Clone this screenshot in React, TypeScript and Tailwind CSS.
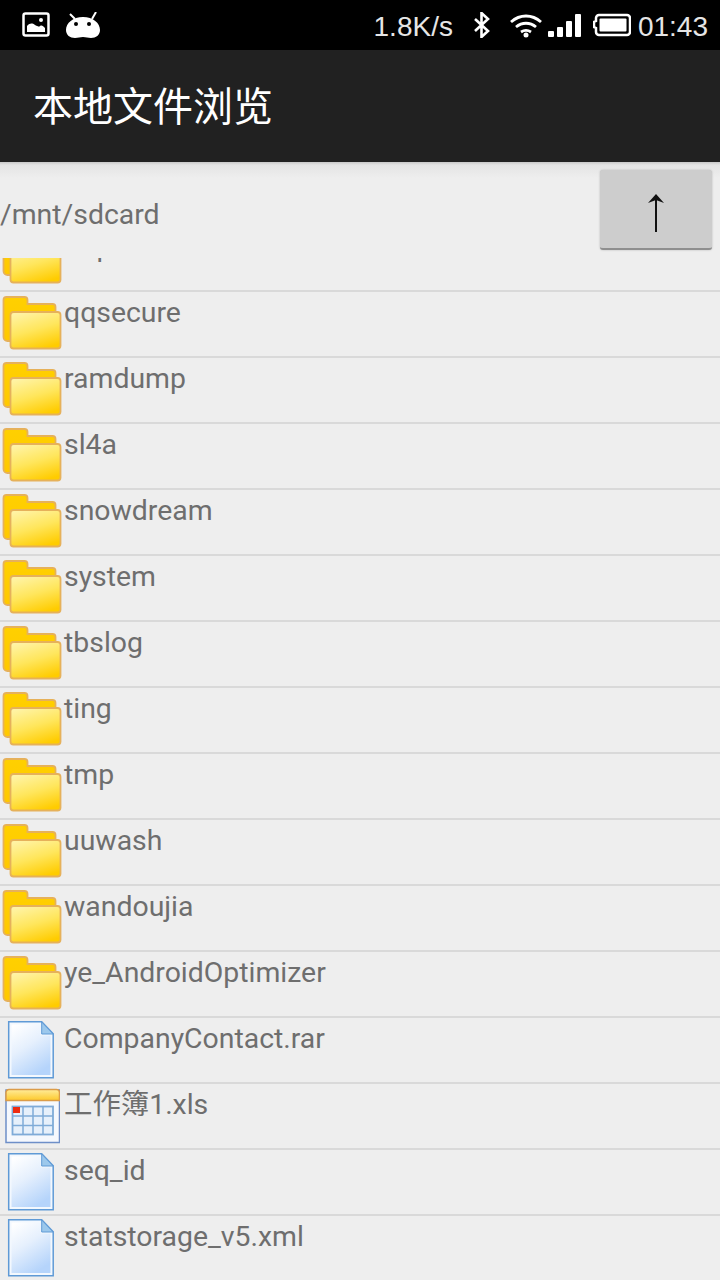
import React from "react";

function Folder() {
  return (
    <svg width="62" height="58" viewBox="0 0 62 58" className="block">
      <defs>
        <linearGradient id="fb" x1="0" y1="0" x2="0" y2="1">
          <stop offset="0" stopColor="#ffd000" />
          <stop offset="1" stopColor="#ffc800" />
        </linearGradient>
        <linearGradient id="ff" x1="0.25" y1="0" x2="0.65" y2="1">
          <stop offset="0" stopColor="#fff3a4" />
          <stop offset="0.5" stopColor="#ffe65c" />
          <stop offset="1" stopColor="#ffcc00" />
        </linearGradient>
      </defs>
      <path d="M3.500 5a3 3 0 0 1 3-3h18a3 3 0 0 1 3 3v4h25a3 3 0 0 1 3 3v10h-44v24h-4a4 4 0 0 1-4-4z" fill="url(#fb)" stroke="#e6b15a" strokeWidth="1.800" />
      <rect x="10.500" y="17" width="50" height="36.500" rx="3" fill="url(#ff)" stroke="#e6b15a" strokeWidth="1.800" />
    </svg>
  );
}

function FileIcon() {
  return (
    <svg width="60" height="58" viewBox="0 0 60 58" className="block">
      <defs>
        <linearGradient id="fg" x1="0.1" y1="0" x2="0.6" y2="1">
          <stop offset="0" stopColor="#ffffff" />
          <stop offset="0.45" stopColor="#e6f0fd" />
          <stop offset="1" stopColor="#b5d4fb" />
        </linearGradient>
      </defs>
      <path d="M8.700 0.800h33l11.500 12v44h-44.500z" fill="#f3f8fe" stroke="#5f9ad6" strokeWidth="1.500" />
      <path d="M11.500 3.500h29v11h10v39.500h-39z" fill="url(#fg)" />
      <path d="M41.700 1v12h11.500z" fill="#9cc8ec" stroke="#5f9ad6" strokeWidth="1" />
    </svg>
  );
}

function XlsIcon() {
  return (
    <svg width="60" height="58" viewBox="0 0 60 58" className="block">
      <defs>
        <linearGradient id="xh" x1="0" y1="0" x2="0" y2="1">
          <stop offset="0" stopColor="#ffec9a" />
          <stop offset="1" stopColor="#fdc92a" />
        </linearGradient>
      </defs>
      <rect x="6" y="3" width="53.500" height="52.500" fill="#f5f8fd" stroke="#6e8fc8" strokeWidth="1.500" />
      <path d="M6 5.500a3 3 0 0 1 3-3h47.500a3 3 0 0 1 3 3v8h-53.500z" fill="url(#xh)" stroke="#dc9c48" strokeWidth="1.500" />
      <rect x="12.500" y="19.500" width="40.500" height="28" fill="#e6f0fb" stroke="#7fabd8" strokeWidth="1.800" />
      <path d="M23 19.500v28M33 19.500v28M43 19.500v28M12.500 29h40.500M12.500 38.500h40.500" stroke="#7fabd8" strokeWidth="1.500" fill="none" />
      <rect x="13" y="20" width="7" height="6" fill="#ee2b10" />
    </svg>
  );
}

type Kind = "folder" | "file" | "xls";
const rows: [string, Kind][] = [
  ["qqsecure", "folder"],
  ["ramdump", "folder"],
  ["sl4a", "folder"],
  ["snowdream", "folder"],
  ["system", "folder"],
  ["tbslog", "folder"],
  ["ting", "folder"],
  ["tmp", "folder"],
  ["uuwash", "folder"],
  ["wandoujia", "folder"],
  ["ye_AndroidOptimizer", "folder"],
  ["CompanyContact.rar", "file"],
  ["工作簿1.xls", "xls"],
  ["seq_id", "file"],
  ["statstorage_v5.xml", "file"],
];

function Row({ name, kind }: { name: string; kind: Kind }) {
  return (
    <div className="flex h-[66px] shrink-0 border-b-2 border-[#d9d9d9]">
      <div className="w-[64px] shrink-0 pt-[3px]">
        {kind === "folder" ? <Folder /> : kind === "file" ? <FileIcon /> : <XlsIcon />}
      </div>
      <span className="text-[28.400px] leading-[42px] text-[#6e6e6e] whitespace-nowrap [font-family:Roboto,'Noto_Sans_CJK_SC',sans-serif]">
        {name}
      </span>
    </div>
  );
}

export default function App() {
  return (
    <div className="flex h-[1280px] w-[720px] flex-col overflow-hidden bg-[#eeeeee] [font-family:Roboto,'Noto_Sans_CJK_SC',sans-serif]">
      <div className="flex h-[50px] shrink-0 items-center justify-between bg-black pl-[22px] pr-[12px]">
        <div className="flex items-center gap-[15px]">
          <svg width="28" height="26" viewBox="0 0 28 26">
            <rect x="1.500" y="1.500" width="25" height="22" rx="2" fill="none" stroke="#fff" strokeWidth="2.500" />
            <path d="M5 20v-6c3-3 5-3 8-1 3 1.500 4 2 5 1 2-1 3 0 5 2v4z" fill="#fff" />
            <circle cx="19" cy="8" r="2" fill="#fff" />
          </svg>
          <svg width="36" height="26" viewBox="0 0 36 26">
            <path d="M5 2l5 5M31 0l-4 7" stroke="#fff" strokeWidth="2" />
            <path d="M18 5c10 0 17 6 17 13 0 5-4 8-9 8-3 0-5-1-8-1s-5 1-8 1c-5 0-9-3-9-8C1 11 8 5 18 5z" fill="#fff" />
            <circle cx="11" cy="12" r="2" fill="#000" />
            <circle cx="24" cy="12" r="2" fill="#000" />
          </svg>
        </div>
        <div className="flex items-center text-[#e6e6e6]">
          <span className="mt-[3px] text-[28px] leading-none [font-family:'Liberation_Sans',sans-serif] font-light">1.8K/s</span>
          <svg width="20" height="26" viewBox="0 0 20 26" className="ml-[19px]">
            <path d="M3 7l13 12-6.500 6V1L16 7 3 19" fill="none" stroke="#fff" strokeWidth="2.600" />
          </svg>
          <svg width="34" height="26" viewBox="0 0 34 26" className="ml-[17px]">
            <path d="M2 10c9-8 21-8 30 0M7 15c6-5 14-5 20 0M12 20c3-2 7-2 10 0" fill="none" stroke="#fff" strokeWidth="2.800" />
            <circle cx="17" cy="23" r="2.500" fill="#fff" />
          </svg>
          <div className="ml-[5px] flex h-[23px] items-end gap-[3px]">
            <div className="h-[6px] w-[6px] rounded-[1px] bg-white" />
            <div className="h-[10px] w-[6px] rounded-[1px] bg-white" />
            <div className="h-[16px] w-[6px] rounded-[1px] bg-white" />
            <div className="h-[23px] w-[6px] rounded-[1px] bg-white" />
          </div>
          <svg width="38" height="24" viewBox="0 0 38 24" className="ml-[12px]">
            <path d="M6 2h28a3 3 0 0 1 3 3v14a3 3 0 0 1-3 3H6a3 3 0 0 1-3-3v-4l-2-1V9l2-1V5a3 3 0 0 1 3-3z" fill="none" stroke="#fff" strokeWidth="2.500" />
            <rect x="6.500" y="5.500" width="27" height="13" rx="1" fill="#fff" />
          </svg>
          <span className="ml-[7px] mt-[3px] text-[28px] leading-none [font-family:'Liberation_Sans',sans-serif] font-light">01:43</span>
        </div>
      </div>

      <div className="flex h-[112px] shrink-0 items-center bg-[#212121] pb-[4px] pl-[33px] text-[40px] leading-none text-white [font-family:'Noto_Sans_CJK_SC',sans-serif]">
        本地文件浏览
      </div>

      <div className="flex h-[96px] shrink-0 items-start justify-between bg-[linear-gradient(to_bottom,#c8c8c8_0px,#e4e4e4_3px,#eeeeee_16px)] pr-[8px] pt-[8px]">
        <span className="mt-[29px] text-[28.400px] leading-[32px] text-[#6e6e6e]">/mnt/sdcard</span>
        <button className="flex h-[80px] w-[112px] items-center justify-center rounded-[3px] border-b-2 border-[#8f8f8f] bg-[#cdcdcd] shadow-[0_0_2px_#b0b0b0]">
          <svg width="18" height="38" viewBox="0 0 18 38" className="mt-[7px]">
            <path d="M9 3v35" stroke="#111" strokeWidth="2" />
            <path d="M9 0l8 9-8-3-8 3z" fill="#111" />
          </svg>
        </button>
      </div>

      <div className="flex min-h-0 flex-1 flex-col overflow-hidden">
        <div className="-mt-[32px] flex flex-col">
          <Row name="oop" kind="folder" />
          {rows.map(([n, k]) => (
            <Row key={n} name={n} kind={k} />
          ))}
        </div>
      </div>
    </div>
  );
}
